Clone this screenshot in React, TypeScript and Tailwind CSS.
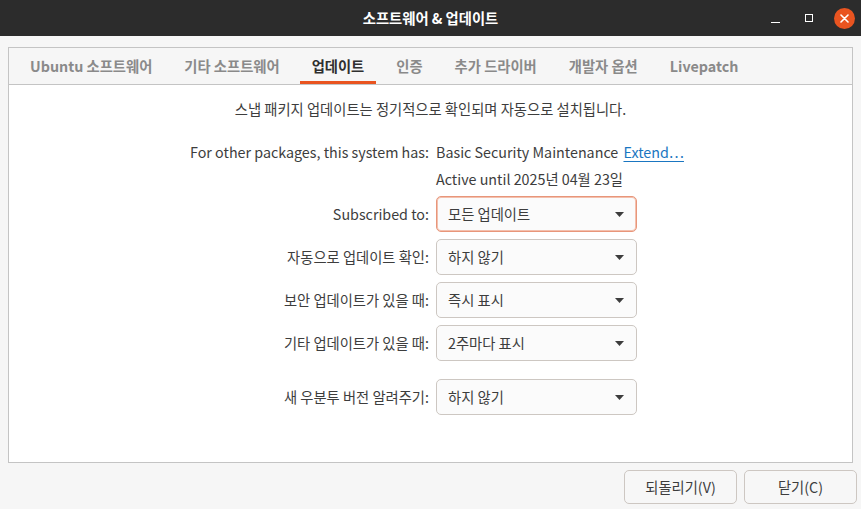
const tabs = [
  { label: "Ubuntu 소프트웨어", active: false },
  { label: "기타 소프트웨어", active: false },
  { label: "업데이트", active: true },
  { label: "인증", active: false },
  { label: "추가 드라이버", active: false },
  { label: "개발자 옵션", active: false },
  { label: "Livepatch", active: false },
];

function Combo({ value, focused }: { value: string; focused?: boolean }) {
  return (
    <div
      className={
        focused
          ? "w-[201px] h-[36px] rounded-[5px] border border-[#e8967a] shadow-[inset_0_0_0_1px_#f3c0ae] bg-[#fbfbfb] flex items-center justify-between pl-[11px] pr-[12px]"
          : "w-[201px] h-[36px] rounded-[5px] border border-[#cdc7c2] bg-[#fbfbfb] flex items-center justify-between pl-[11px] pr-[12px]"
      }
    >
      <span>{value}</span>
      <svg width="9" height="5" viewBox="0 0 9 5">
        <path d="M0 0 L9 0 L4.5 5 Z" fill="#3d3d3d" />
      </svg>
    </div>
  );
}

function Row({ label, value, focused }: { label: string; value: string; focused?: boolean }) {
  return (
    <>
      <div className="text-right self-center">{label}</div>
      <Combo value={value} focused={focused} />
    </>
  );
}

export default function App() {
  return (
    <div
      className="w-[861px] h-[509px] bg-[#f6f6f6] flex flex-col text-[14.3px] text-[#3d3d3d] overflow-hidden"
      style={{ fontFamily: '"Noto Sans CJK KR", "Noto Sans", sans-serif' }}
    >
      {/* Title bar */}
      <div className="h-[36px] bg-[#2c2c2c] flex items-center relative shrink-0">
        <div className="flex-1 text-center text-white font-bold">소프트웨어 &amp; 업데이트</div>
        <div className="absolute right-[6px] top-0 h-full flex items-center gap-[16px]">
          <div className="w-[18px] h-[18px] flex items-end justify-center pb-[4px]">
            <div className="w-[9px] h-[1.5px] bg-white" />
          </div>
          <div className="w-[18px] h-[18px] flex items-center justify-center">
            <div className="w-[8px] h-[8px] border border-white" />
          </div>
          <div className="w-[21px] h-[21px] rounded-full bg-[#e95420] flex items-center justify-center">
            <svg width="9" height="9" viewBox="0 0 9 9">
              <path d="M1 1 L8 8 M8 1 L1 8" stroke="white" strokeWidth="1.6" strokeLinecap="round" />
            </svg>
          </div>
        </div>
      </div>

      {/* Notebook */}
      <div className="px-[8px] pt-[11px]">
        <div className="h-[416px] border border-[#c4c4c4] flex flex-col">
          <div className="h-[37px] flex items-stretch gap-[8px] pl-[9px] border-b border-[#c4c4c4] shrink-0">
            {tabs.map((t) => (
              <div
                key={t.label}
                className={
                  t.active
                    ? "px-[12px] flex items-center font-bold text-[#2f2f2f] border-b-[3px] border-[#e95420] pt-[3px]"
                    : "px-[12px] flex items-center font-bold text-[#8a8a8a] border-b-[3px] border-transparent pt-[3px]"
                }
              >
                {t.label}
              </div>
            ))}
          </div>

          <div className="flex-1 bg-white flex flex-col pt-[14px]">
            <div className="text-center leading-[20px]">
              스냅 패키지 업데이트는 정기적으로 확인되며 자동으로 설치됩니다.
            </div>

            <div className="grid grid-cols-[420px_1fr] gap-x-[7px] gap-y-[7px] mt-[23px] leading-[20px]">
              <div className="text-right">For other packages, this system has:</div>
              <div>
                Basic Security Maintenance{" "}
                <span className="ml-[2px] text-[#1a76c1] underline underline-offset-[3px]">Extend…</span>
              </div>
              <div />
              <div>Active until 2025년 04월 23일</div>

              <Row label="Subscribed to:" value="모든 업데이트" focused />
              <Row label="자동으로 업데이트 확인:" value="하지 않기" />
              <Row label="보안 업데이트가 있을 때:" value="즉시 표시" />
              <Row label="기타 업데이트가 있을 때:" value="2주마다 표시" />
              <div className="col-span-2 h-[4px]" />
              <Row label="새 우분투 버전 알려주기:" value="하지 않기" />
            </div>
          </div>
        </div>
      </div>

      {/* Buttons */}
      <div className="flex justify-end gap-[7px] pr-[4px] pt-[7px]">
        <button className="w-[113px] h-[34px] rounded-[5px] border border-[#cdc7c2] bg-[#f7f7f7] text-[#3d3d3d]">
          되돌리기(V)
        </button>
        <button className="w-[113px] h-[34px] rounded-[5px] border border-[#cdc7c2] bg-[#f7f7f7] text-[#3d3d3d]">
          닫기(C)
        </button>
      </div>
    </div>
  );
}
